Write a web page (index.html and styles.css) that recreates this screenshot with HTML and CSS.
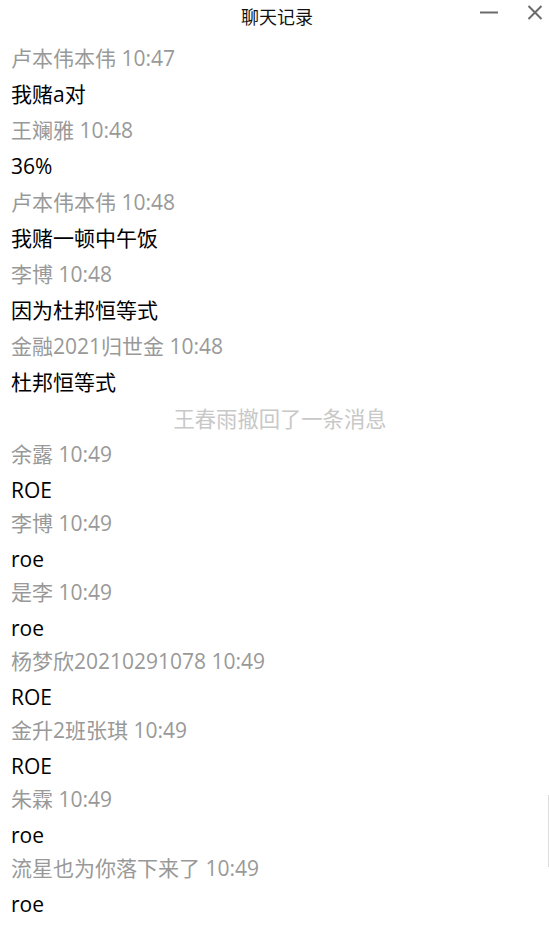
FILE: index.html
```html
<!DOCTYPE html>
<html lang="zh-CN">
<head>
<meta charset="utf-8">
<title>聊天记录</title>
<link rel="stylesheet" href="styles.css">
</head>
<body>
<div class="window">
  <header class="titlebar">
    <div class="title">聊天记录</div>
    <div class="controls">
      <svg class="ctl" width="20" height="20" viewBox="0 0 20 20"><line x1="1" y1="12.5" x2="19" y2="12.5" stroke="#6b6b6b" stroke-width="2"/></svg>
      <svg class="ctl" width="20" height="20" viewBox="0 0 20 20"><path d="M3.5 6 L16.5 19 M16.5 6 L3.5 19" stroke="#6b6b6b" stroke-width="2" fill="none"/></svg>
    </div>
  </header>
  <main class="log">
    <div class="name">卢本伟本伟 10:47</div>
    <div class="msg">我赌a对</div>
    <div class="name">王斓雅 10:48</div>
    <div class="msg">36%</div>
    <div class="name">卢本伟本伟 10:48</div>
    <div class="msg">我赌一顿中午饭</div>
    <div class="name">李博 10:48</div>
    <div class="msg">因为杜邦恒等式</div>
    <div class="name">金融2021归世金 10:48</div>
    <div class="msg">杜邦恒等式</div>
    <div class="recall">王春雨撤回了一条消息</div>
    <div class="name">余露 10:49</div>
    <div class="msg latin">ROE</div>
    <div class="name">李博 10:49</div>
    <div class="msg latin">roe</div>
    <div class="name">是李 10:49</div>
    <div class="msg latin">roe</div>
    <div class="name">杨梦欣20210291078 10:49</div>
    <div class="msg latin">ROE</div>
    <div class="name">金升2班张琪 10:49</div>
    <div class="msg latin">ROE</div>
    <div class="name">朱霖 10:49</div>
    <div class="msg latin">roe</div>
    <div class="name">流星也为你落下来了 10:49</div>
    <div class="msg latin">roe</div>
  </main>
  <div class="scrollbar"></div>
</div>
</body>
</html>
```

FILE: styles.css
```css
html, body {
  margin: 0;
  padding: 0;
  background: #ffffff;
}
body {
  font-family: "Open Sans", "Noto Sans CJK SC", sans-serif;
  width: 549px;
  height: 931px;
  overflow: hidden;
}
.window {
  position: relative;
  height: 931px;
}
.titlebar {
  height: 32px;
  display: flex;
  align-items: center;
  justify-content: center;
  position: relative;
}
.title {
  font-family: "Noto Sans CJK SC", sans-serif;
  font-size: 18px;
  line-height: 32px;
  color: #111;
  padding-left: 5px;
}
.controls {
  position: absolute;
  right: 4px;
  top: 0;
  display: flex;
  gap: 26px;
}
.ctl {
  display: block;
}
.log {
  padding: 8px 0 0 11px;
  display: flex;
  flex-direction: column;
}
.name {
  height: 36px;
  line-height: 37px;
  font-size: 21px;
  color: #999999;
  white-space: nowrap;
}
.msg {
  height: 36px;
  line-height: 36px;
  font-size: 21px;
  color: #000;
  white-space: nowrap;
}
.msg.latin {
  height: 33px;
  line-height: 36px;
}
.recall {
  height: 36px;
  line-height: 36px;
  font-size: 21.3px;
  color: #c8c8c8;
  text-align: center;
  font-family: "Noto Sans CJK SC", sans-serif;
}
.scrollbar {
  position: absolute;
  right: 0;
  top: 795px;
  width: 1px;
  height: 72px;
  background: #dddddd;
}
```
